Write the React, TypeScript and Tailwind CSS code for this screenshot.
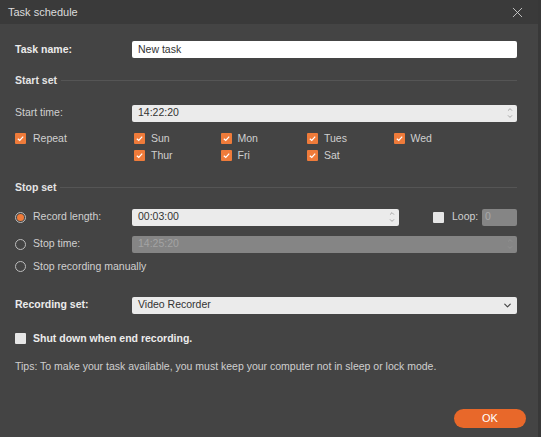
import { X, ChevronDown, ChevronUp } from "lucide-react"

const days = [
  ["Sun", "Mon", "Tues", "Wed"],
  ["Thur", "Fri", "Sat"],
]

function Check({ on = true }: { on?: boolean }) {
  return (
    <span
      className={`w-[11px] h-[11px] flex items-center justify-center shrink-0 rounded-[1px] ${
        on ? "bg-[#ef7b3a]" : "bg-[#e6e6e6]"
      }`}
    >
      {on && (
        <svg viewBox="0 0 10 10" className="w-[9px] h-[9px]">
          <path d="M2 5.2 L4.2 7.2 L8 3" fill="none" stroke="white" strokeWidth="1.4" />
        </svg>
      )}
    </span>
  )
}

function Radio({ on = false }: { on?: boolean }) {
  return (
    <span className="w-[11px] h-[11px] rounded-full border border-[#bdbdbd] flex items-center justify-center shrink-0">
      {on && <span className="w-[7px] h-[7px] rounded-full bg-[#ef7b3a]" />}
    </span>
  )
}

function Spin({ dim = false }: { dim?: boolean }) {
  return (
    <span className={`flex flex-col items-center leading-none ${dim ? "text-[#9a9a9a]" : "text-[#777]"}`}>
      <ChevronUp className="w-[8px] h-[7px]" strokeWidth={2} />
      <ChevronDown className="w-[8px] h-[7px]" strokeWidth={2} />
    </span>
  )
}

function Section({ title }: { title: string }) {
  return (
    <div className="flex items-center gap-[4px] font-bold text-[#e4e4e4]">
      <span>{title}</span>
      <span className="flex-1 h-px bg-[#555555]" />
    </div>
  )
}

export default function App() {
  return (
    <div
      className="w-[541px] h-[437px] bg-[#444444] flex flex-col text-[10.5px] text-[#d0d0d0] border-r-[3px] border-[#383838]"
      style={{ fontFamily: '"Liberation Sans", Arial, sans-serif' }}
    >
      {/* Title bar */}
      <div className="h-[24px] bg-[#3a3a3a] flex items-center justify-between pl-[8px] pr-[12px]">
        <span className="text-[11px] text-[#dcdcdc]">Task schedule</span>
        <X className="w-[17px] h-[17px] text-[#d6d6d6]" strokeWidth={1.2} />
      </div>

      <div className="flex flex-col pl-[15px] pr-[21px]">
        {/* Task name */}
        <div className="flex items-center mt-[17px] h-[17px]">
          <span className="w-[117px] font-bold text-[#ececec]">Task name:</span>
          <div className="flex-1 h-[17px] bg-white rounded-[2px] px-[6px] flex items-center text-[#333]">New task</div>
        </div>

        <div className="mt-[15px]">
          <Section title="Start set" />
        </div>

        {/* Start time */}
        <div className="flex items-center mt-[16px] h-[17px]">
          <span className="w-[117px]">Start time:</span>
          <div className="flex-1 h-[17px] bg-[#ebebeb] rounded-[2px] pl-[6px] pr-[3px] flex items-center justify-between text-[#333]">
            <span>14:22:20</span>
            <Spin />
          </div>
        </div>

        {/* Repeat */}
        <div className="flex mt-[11px]">
          <div className="w-[117px] flex items-center gap-[7px] h-[12px]">
            <Check />
            <span>Repeat</span>
          </div>
          <div className="flex flex-col gap-[5px] pl-[2px]">
            {days.map((row, i) => (
              <div key={i} className="flex h-[12px]">
                {row.map((d) => (
                  <div key={d} className="w-[86.5px] flex items-center gap-[6px]">
                    <Check />
                    <span>{d}</span>
                  </div>
                ))}
              </div>
            ))}
          </div>
        </div>

        <div className="mt-[18px]">
          <Section title="Stop set" />
        </div>

        {/* Record length */}
        <div className="flex items-center mt-[13px] h-[17px]">
          <div className="w-[117px] flex items-center gap-[7px]">
            <Radio on />
            <span>Record length:</span>
          </div>
          <div className="w-[267px] h-[17px] bg-[#ebebeb] rounded-[2px] pl-[6px] pr-[3px] flex items-center justify-between text-[#333]">
            <span>00:03:00</span>
            <Spin />
          </div>
          <div className="ml-[34px] flex items-center gap-[8px]">
            <Check on={false} />
            <span>Loop:</span>
          </div>
          <div className="ml-auto w-[35px] h-[17px] bg-[#858585] rounded-[2px] px-[3px] flex items-center text-[#a8a8a8]">0</div>
        </div>

        {/* Stop time */}
        <div className="flex items-center mt-[10px] h-[17px]">
          <div className="w-[117px] flex items-center gap-[7px]">
            <Radio />
            <span>Stop time:</span>
          </div>
          <div className="flex-1 h-[17px] bg-[#858585] rounded-[2px] pl-[6px] pr-[3px] flex items-center justify-between text-[#a3a3a3]">
            <span>14:25:20</span>
            <Spin dim />
          </div>
        </div>

        {/* Stop manually */}
        <div className="flex items-center gap-[7px] mt-[7px] h-[14px]">
          <Radio />
          <span>Stop recording manually</span>
        </div>

        {/* Recording set */}
        <div className="flex items-center mt-[23px] h-[17px]">
          <span className="w-[117px] font-bold text-[#ececec]">Recording set:</span>
          <div className="flex-1 h-[17px] bg-[#ebebeb] rounded-[2px] pl-[6px] pr-[4px] flex items-center justify-between text-[#333]">
            <span>Video Recorder</span>
            <ChevronDown className="w-[11px] h-[11px] text-[#444]" strokeWidth={2.5} />
          </div>
        </div>

        {/* Shut down */}
        <div className="flex items-center gap-[7px] mt-[18px] h-[14px]">
          <Check on={false} />
          <span className="font-bold text-[#ececec]">Shut down when end recording.</span>
        </div>

        <div className="mt-[13px] text-[#cfcfcf]">
          Tips: To make your task available, you must keep your computer not in sleep or lock mode.
        </div>
      </div>

      <div className="mt-auto mb-[9px] flex justify-end pr-[12px]">
        <button className="w-[72px] h-[19px] rounded-full bg-[#e8682a] text-white text-[11px] flex items-center justify-center">
          OK
        </button>
      </div>
    </div>
  )
}
